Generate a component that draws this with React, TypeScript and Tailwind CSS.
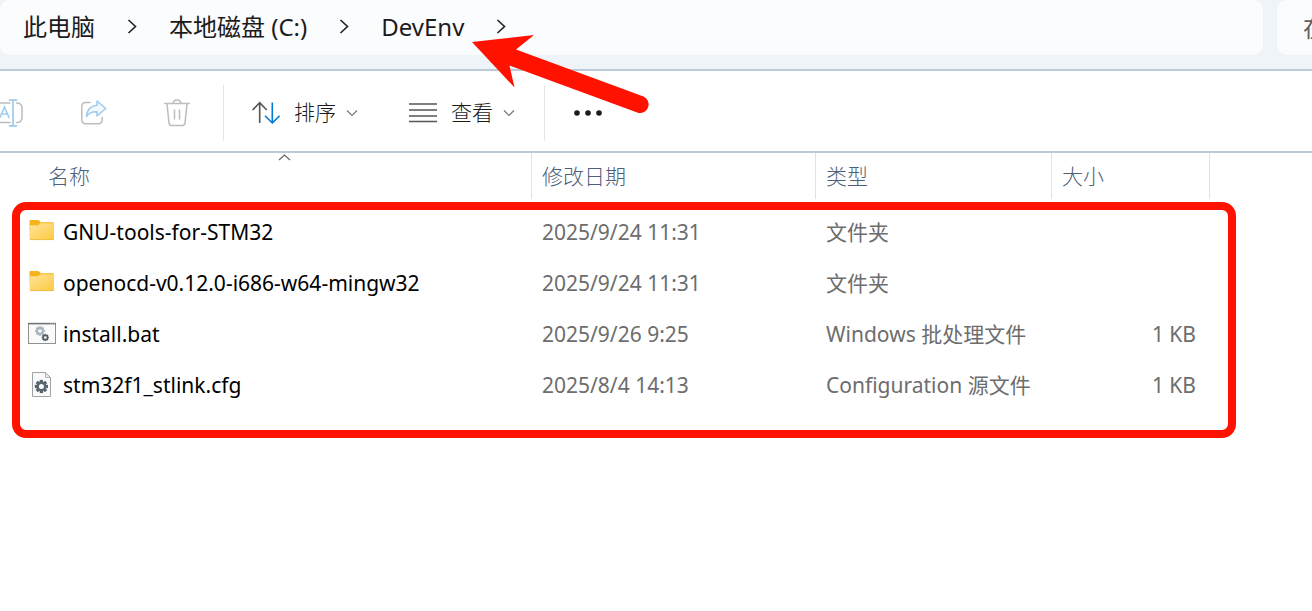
import type { ReactNode } from "react";

type FileRow = {
  name: string;
  modified: string;
  type: string;
  size: string;
  icon: ReactNode;
};

function FolderIcon({ id }: { id: string }) {
  return (
    <svg width="28" height="28" viewBox="0 0 28 28" aria-hidden="true">
      <defs>
        <linearGradient id={id} x1="0" y1="0" x2="1" y2="1">
          <stop offset="0" stopColor="#ffe49b" />
          <stop offset="1" stopColor="#fcc93f" />
        </linearGradient>
      </defs>
      <path d="M1.5 4.2Q1.5 3 2.7 3H9.8Q10.6 3 11.200 3.6L12.8 5.3H24.6Q26 5.3 26 6.5V14H1.5Z" fill="#f5b41c" />
      <path d="M1.5 8.2H9.6Q10.4 8.2 11 7.6L12 6.2H26V21.8Q26 23 24.8 23H2.7Q1.5 23 1.5 21.8Z" fill={`url(#${id})`} />
      <path d="M2 22.6H25.6" stroke="#eab93c" strokeWidth="0.8" />
    </svg>
  );
}

function Gear({ cx, cy, r, color, hole }: { cx: number; cy: number; r: number; color: string; hole: string }) {
  return (
    <g transform={`translate(${cx} ${cy})`}>
      {[0, 45, 90, 135].map((a) => (
        <rect key={a} x={-r * 0.25} y={-r} width={r * 0.5} height={r * 2} fill={color} transform={`rotate(${a})`} />
      ))}
      <circle r={r * 0.76} fill={color} />
      <circle r={r * 0.38} fill={hole} />
    </g>
  );
}

function BatchIcon() {
  return (
    <svg width="28" height="28" viewBox="0 0 28 28" aria-hidden="true">
      <rect x="0.5" y="4.5" width="27" height="20" fill="#fafafa" stroke="#909395" />
      <path d="M0 4.6H28" stroke="#717477" strokeWidth="1.6" />
      <path d="M22 4.6H27" stroke="#b5b8ba" strokeWidth="0.8" strokeDasharray="1 1" />
      <Gear cx={12} cy={12} r={4.8} color="#a8b4bd" hole="#fafafa" />
      <Gear cx={17.3} cy={18.5} r={3.6} color="#4f5d67" hole="#fafafa" />
    </svg>
  );
}

function ConfigIcon() {
  return (
    <svg width="28" height="28" viewBox="0 0 28 28" aria-hidden="true">
      <path d="M4.5 2.5H17.5L22.5 7.5V26.5H4.5Z" fill="#fafafa" stroke="#a0a3a5" />
      <path d="M17.5 2.5V7.5H22.5Z" fill="#e9eaeb" stroke="#a0a3a5" strokeWidth="0.8" />
      <Gear cx={13.4} cy={16.5} r={6.6} color="#56656f" hole="#fafafa" />
    </svg>
  );
}

function RenameIcon() {
  return (
    <svg width="28" height="28" viewBox="0 0 28 28" fill="none" strokeLinecap="round" aria-hidden="true">
      <path d="M14 4H5Q1 4 1 8V19Q1 23.500 5 23.500H14M20.500 4Q26 4 26 9V18.500Q26 23.500 20.500 23.500" stroke="#bdbdbd" strokeWidth="1.500" />
      <path d="M17 1.200V26.800M13.500 1.200H20.500M13.500 26.800H20.500" stroke="#9dcbee" strokeWidth="1.700" />
      <path d="M4 18.500L8.500 8L13 18.500M5.500 15H11.500" stroke="#9dcbee" strokeWidth="1.500" />
    </svg>
  );
}

function ShareIcon() {
  return (
    <svg width="28" height="28" viewBox="0 0 28 28" fill="none" strokeLinecap="round" strokeLinejoin="round" aria-hidden="true">
      <path d="M11 3.500H7Q2.800 3.500 2.800 7.700V20.500Q2.800 24.700 7 24.700H19Q23.200 24.700 23.200 20.500V18.500" stroke="#bdbdbd" strokeWidth="1.500" />
      <path d="M18 2L26.800 9.500L18 17V12.700Q10.500 12.500 7.500 17.500Q8 7.300 18 6.300Z" fill="#f2f8fd" stroke="#9dcbee" strokeWidth="1.500" />
    </svg>
  );
}

function DeleteIcon() {
  return (
    <svg width="28" height="28" viewBox="0 0 28 28" fill="none" stroke="#bdbdbd" strokeWidth="1.500" strokeLinecap="round" aria-hidden="true">
      <path d="M1.700 4.500H26.300M10 4.500Q10.400 0.900 14 0.900T18 4.500M4 4.800L6 23.800Q6.300 26.500 9 26.500H19Q21.700 26.500 22 23.800L24 4.800" />
      <path d="M11.500 11V20M16.500 11V20" />
    </svg>
  );
}

function SortIcon() {
  return (
    <svg width="28" height="28" viewBox="0 0 28 28" fill="none" strokeWidth="1.600" aria-hidden="true">
      <path d="M7.700 24V4M0.600 11L7.700 3.700L14.800 11" stroke="#555" />
      <path d="M20.300 3.500V24M13 16.800L20.300 24L27.600 16.800" stroke="#0078d4" />
    </svg>
  );
}

function ViewIcon() {
  return (
    <svg width="28" height="28" viewBox="0 0 28 28" stroke="#555" strokeWidth="1.500" aria-hidden="true">
      <path d="M0 5H28M0 11H28M0 17H28M0 22.500H28" />
    </svg>
  );
}

function MoreIcon() {
  return (
    <svg width="28" height="28" viewBox="0 0 28 28" fill="#1b1b1b" aria-hidden="true">
      <circle cx="3" cy="14" r="2.800" />
      <circle cx="14" cy="14" r="2.800" />
      <circle cx="25" cy="14" r="2.800" />
    </svg>
  );
}

function ChevronDown() {
  return (
    <svg width="12" height="8" viewBox="0 0 12 8" fill="none" stroke="#777" strokeWidth="1.200" aria-hidden="true">
      <path d="M1 1.500L6 6.500L11 1.500" />
    </svg>
  );
}

function ChevronRight() {
  return (
    <svg width="10" height="16" viewBox="0 0 10 16" fill="none" stroke="#222" strokeWidth="1.600" aria-hidden="true">
      <path d="M1.500 1L8.500 7.500L1.500 14" />
    </svg>
  );
}

const rows: FileRow[] = [
  { name: "GNU-tools-for-STM32", modified: "2025/9/24 11:31", type: "文件夹", size: "", icon: <FolderIcon id="folder-gnu" /> },
  { name: "openocd-v0.12.0-i686-w64-mingw32", modified: "2025/9/24 11:31", type: "文件夹", size: "", icon: <FolderIcon id="folder-openocd" /> },
  { name: "install.bat", modified: "2025/9/26 9:25", type: "Windows 批处理文件", size: "1 KB", icon: <BatchIcon /> },
  { name: "stm32f1_stlink.cfg", modified: "2025/8/4 14:13", type: "Configuration 源文件", size: "1 KB", icon: <ConfigIcon /> },
];

function AddressBar() {
  return (
    <header className="flex h-[71px] items-start gap-[14px] border-b-2 border-[#bccbd9] bg-[#eff4f9]">
      <nav aria-label="路径" className="flex h-[55px] min-w-0 flex-1 items-center rounded-[10px] bg-[#fbfcfe] pb-[2px] pl-[23px] text-2xl text-[#1b1b1b]">
        <a href="#pc" className="mr-8 whitespace-nowrap">此电脑</a>
        <ChevronRight />
        <a href="#c" className="mr-8 ml-8 whitespace-nowrap">本地磁盘 (C:)</a>
        <ChevronRight />
        <a href="#devenv" className="mr-8 ml-8 whitespace-nowrap">DevEnv</a>
        <ChevronRight />
      </nav>
      <div className="flex h-[55px] w-[35px] items-center overflow-hidden rounded-l-[10px] bg-[#fbfcfe] pl-[26px]">
        <input
          type="text"
          aria-label="搜索"
          placeholder="在 DevEnv 中搜索"
          className="h-full w-60 shrink-0 bg-transparent text-2xl text-[#1b1b1b] outline-none placeholder:text-[#5f5f5f]"
        />
      </div>
    </header>
  );
}

function Toolbar() {
  return (
    <div role="toolbar" aria-label="命令" className="flex h-[82px] items-center border-b-2 border-[#bccbd9] bg-white pt-1 text-[21px] font-light text-[#1b1b1b]">
      <button type="button" aria-label="重命名" className="-ml-1 shrink-0"><RenameIcon /></button>
      <button type="button" aria-label="共享" className="ml-[55px] shrink-0"><ShareIcon /></button>
      <button type="button" aria-label="删除" className="ml-14 shrink-0"><DeleteIcon /></button>
      <div className="ml-8 h-14 w-px shrink-0 bg-[#e6e6e6]" />
      <button type="button" className="ml-7 flex shrink-0 items-center">
        <SortIcon />
        <span className="mr-[10px] ml-[14px]">排序</span>
        <ChevronDown />
      </button>
      <button type="button" className="ml-[51px] flex shrink-0 items-center">
        <ViewIcon />
        <span className="mr-[10px] ml-[14px]">查看</span>
        <ChevronDown />
      </button>
      <div className="ml-[29px] h-14 w-px shrink-0 bg-[#e6e6e6]" />
      <button type="button" aria-label="查看更多" className="ml-[29px] shrink-0"><MoreIcon /></button>
    </div>
  );
}

function HeaderCell({ children, sorted }: { children: ReactNode; sorted?: boolean }) {
  return (
    <th scope="col" aria-sort={sorted ? "ascending" : undefined} className="p-0 align-top font-light">
      <div className={`relative flex h-[46px] items-center border-r border-[#e2e2e2] pt-[2px] text-left ${sorted ? "pl-12" : "pl-[10px]"}`}>
        {children}
        {sorted && (
          <svg className="absolute top-0 left-[278px]" width="13" height="8" viewBox="0 0 13 8" fill="none" stroke="#666" strokeWidth="1.200" aria-hidden="true">
            <path d="M1 7L6.500 2L12 7" />
          </svg>
        )}
      </div>
    </th>
  );
}

function FileTable() {
  return (
    <table className="w-full table-fixed border-collapse text-[21px]">
      <colgroup>
        <col className="w-[532px]" />
        <col className="w-[284px]" />
        <col className="w-[236px]" />
        <col className="w-[158px]" />
        <col />
      </colgroup>
      <thead className="text-[#4c607a]">
        <tr className="h-[54px]">
          <HeaderCell sorted>名称</HeaderCell>
          <HeaderCell>修改日期</HeaderCell>
          <HeaderCell>类型</HeaderCell>
          <HeaderCell>大小</HeaderCell>
          <td />
        </tr>
      </thead>
      <tbody className="text-[#6d6d6d]">
        {rows.map((row) => (
          <tr key={row.name} className="h-[51px]">
            <td className="p-0 pl-7 text-black">
              <div className="flex items-center gap-[7px] whitespace-nowrap">
                <span className="shrink-0 pb-1">{row.icon}</span>
                <span>{row.name}</span>
              </div>
            </td>
            <td className="p-0 pl-[10px] whitespace-nowrap">{row.modified}</td>
            <td className="p-0 pl-[10px] whitespace-nowrap">{row.type}</td>
            <td className="p-0 pr-[14px] text-right whitespace-nowrap">{row.size}</td>
            <td />
          </tr>
        ))}
      </tbody>
    </table>
  );
}

export default function App() {
  return (
    <div className="relative min-h-screen overflow-hidden bg-white font-['Noto_Sans','Noto_Sans_CJK_SC',sans-serif]">
      <AddressBar />
      <Toolbar />
      <main className="relative pb-[27px]">
        <FileTable />
        <div className="pointer-events-none absolute top-[49px] right-[76px] bottom-0 left-3 rounded-[14px] border-8 border-[#ff1200]" />
      </main>
      <svg className="pointer-events-none absolute top-[30px] left-[470px]" width="184" height="90" viewBox="470 30 184 90" fill="#ff1200" aria-hidden="true">
        <path d="M472 42L534 35L516 49.500L643.500 96.500A8.700 8.700 0 0 1 638.500 113L509.500 65.500L514.500 87.500Z" />
      </svg>
    </div>
  );
}
